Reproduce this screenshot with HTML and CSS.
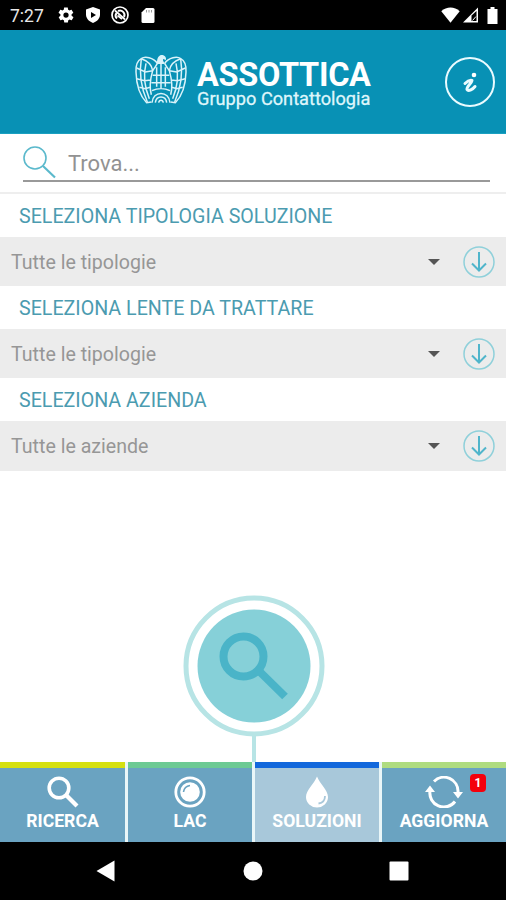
FILE: index.html
```html
<!DOCTYPE html>
<html lang="it">
    <head>
        <meta charset="UTF-8" />
        <meta name="viewport" content="width=device-width, initial-scale=1.0" />
        <title>Assottica - Soluzioni</title>

        <link rel="stylesheet" href="styles.css">
    </head>
    <body>
        <div class="app">
            <div class="status-bar">
                <span class="time">7:27</span>
                <div class="status-icons">
                    <svg width="18" height="18" viewBox="0 0 24 24" fill="#fff"><path d="M19.4 13c0-.3.1-.6.1-1s0-.7-.1-1l2.100-1.600c.2-.2.200-.4.100-.6l-2-3.500c-.1-.2-.4-.3-.6-.2l-2.500 1c-.5-.4-1.100-.7-1.700-1l-.4-2.600c0-.3-.2-.5-.5-.5h-4c-.2 0-.4.200-.5.400l-.4 2.700c-.6.200-1.100.6-1.700 1l-2.500-1c-.2-.1-.5 0-.6.200l-2 3.500c-.1.200-.1.500.1.600L4.600 11c0 .3-.1.700-.1 1s0 .7.100 1l-2.100 1.600c-.2.200-.2.400-.1.600l2 3.500c.1.200.4.300.6.200l2.500-1c.5.400 1.100.7 1.700 1l.4 2.600c0 .2.200.4.500.4h4c.2 0 .5-.2.500-.4l.4-2.600c.6-.3 1.200-.6 1.700-1l2.500 1c.2.100.5 0 .6-.2l2-3.500c.1-.2.100-.5-.1-.6zM12 15.500a3.500 3.500 0 1 1 0-7 3.500 3.500 0 0 1 0 7z"/></svg>
                    <svg width="18" height="18" viewBox="0 0 18 18"><path d="M9 1L16 3.500V8.500C16 12.500 13 15.500 9 17C5 15.500 2 12.500 2 8.500V3.500Z" fill="#fff"/><path d="M7 6L12 9L7 12Z" fill="#000"/></svg>
                    <svg width="20" height="20" viewBox="0 0 20 20" fill="none" stroke="#fff"><circle cx="10" cy="10" r="8" stroke-width="1.700"/><path d="M7 13.500A4.300 4.300 0 0 1 6.500 8M8 6A4.500 4.500 0 0 1 14 12" stroke-width="2"/><path d="M5 5.500L15 14.500" stroke-width="1.700"/><path d="M7.500 10.500L12 14" stroke-width="1.700"/></svg>
                    <svg width="14" height="17" viewBox="0 0 14 17"><path d="M5 1H12a1.500 1.500 0 0 1 1.500 1.500V14.500a1.500 1.500 0 0 1-1.500 1.500H2A1.500 1.500 0 0 1 .5 14.500V5.500Z" fill="#fff"/><path d="M5.500 3v2.500M8 3v2.500M10.500 3v2.500" stroke="#999"/></svg>
                </div>
                <div class="signal-icons">
                    <svg width="19" height="16" viewBox="0 0 19 16"><path d="M.3 4.300C5.500-.7 13.500-.7 18.700 4.300L9.500 15.700Z" fill="#fff"/></svg>
                    <svg width="17" height="16" viewBox="0 0 17 16"><path d="M1 15.500L16 .5V15.500Z" fill="#fff"/><path d="M9.500 8.500L14.500 4V14H9.500Z" fill="#000"/><path d="M10.500 13.500l3.500-4" stroke="#fff"/></svg>
                    <svg width="11" height="17" viewBox="0 0 11 17"><path d="M3.500 0H7.500V2H10.500V17H.5V2H3.500Z" fill="#fff"/></svg>
                </div>
            </div>

            <header>
                <svg class="eagle" width="62" height="60" viewBox="0 0 186 180" fill="none" stroke="#d9f3fa" stroke-width="4.500">
                    <path d="M82 40C70 22 44 18 34 26C22 32 17 48 18 66C19 104 30 138 50 158L64 156"/>
                    <path d="M104 40C116 22 142 18 152 26C164 32 169 48 168 66C167 104 156 138 136 158L122 156"/>
                    <path d="M34 26C26 74 36 120 52 156M34 26C58 34 66 46 68 62C60 90 58 114 64 134M48 40C40 72 44 112 58 146M20 54L46 66L68 62M20 86L44 92L62 90M28 112L46 116L60 112"/>
                    <path d="M152 26C160 74 150 120 134 156M152 26C128 34 120 46 118 62C126 90 128 114 122 134M138 40C146 72 142 112 128 146M166 54L140 66L118 62M166 86L142 92L124 90M158 112L140 116L126 112"/>
                    <path d="M68 62C74 54 78 48 82 40M118 62C112 54 108 48 104 40M80 52V110M93 42V118M106 52V110M68 76H118M64 98H122M66 122C82 114 104 114 120 122"/>
                    <path d="M66 158C68 121 118 121 120 158M76 158C79 135 107 135 110 158M86 158C88 148 98 148 100 158"/>
                    <path d="M81 42C80 20 90 13 100 16C106 18 109 23 108 30L99 27C98 33 102 37 105 42Z" fill="#d9f3fa" stroke="none"/>
                </svg>
                <div class="brand">
                    <h1>ASSOTTICA</h1>
                    <p>Gruppo Contattologia</p>
                </div>
                <div class="info">
                    <svg width="50" height="52" viewBox="0 0 50 52" fill="none" stroke="#eafbff"><circle cx="25" cy="26" r="24" stroke-width="2"/><circle cx="29" cy="19" r="2.300" fill="#fff" stroke="none"/><path d="M20 27.500C22 25.500 25 24 27 24.500C26.500 27.500 21.500 30.500 22 33.500C23.500 36 28 33 30 30.500" stroke-width="3" stroke-linecap="round" stroke-linejoin="round"/></svg>
                </div>
            </header>

            <main>
                <div class="search">
                    <div class="search-field">
                        <svg width="34" height="34" viewBox="0 0 34 34" fill="none" stroke="#5bb9cc"><circle cx="12" cy="12" r="11" stroke-width="1.600"/><path d="M20 20L32 31.500" stroke-width="2.200"/></svg>
                        <span>Trova...</span>
                    </div>
                </div>

                <h2>SELEZIONA TIPOLOGIA SOLUZIONE</h2>
                <div class="select">
                    <span>Tutte le tipologie</span>
                    <i class="caret"></i>
                    <svg class="down" viewBox="0 0 32 32"><circle cx="16" cy="16" r="15"/><path d="M16 6V24M9 17.500L16 24.500L23 17.500"/></svg>
                </div>

                <h2>SELEZIONA LENTE DA TRATTARE</h2>
                <div class="select">
                    <span>Tutte le tipologie</span>
                    <i class="caret"></i>
                    <svg class="down" viewBox="0 0 32 32"><circle cx="16" cy="16" r="15"/><path d="M16 6V24M9 17.500L16 24.500L23 17.500"/></svg>
                </div>

                <h2>SELEZIONA AZIENDA</h2>
                <div class="select">
                    <span>Tutte le aziende</span>
                    <i class="caret"></i>
                    <svg class="down" viewBox="0 0 32 32"><circle cx="16" cy="16" r="15"/><path d="M16 6V24M9 17.500L16 24.500L23 17.500"/></svg>
                </div>

                <div class="search-button">
                    <svg width="142" height="167" viewBox="0 0 142 167" fill="none"><path d="M71 140V167" stroke="#b7e4e5" stroke-width="4"/><circle cx="71" cy="71" r="68" stroke="#b7e4e5" stroke-width="5"/><circle cx="71" cy="71" r="56.500" fill="#86d0d8"/><g stroke="#4ab4c8"><circle cx="60.500" cy="61.500" r="20" stroke-width="8"/><path d="M75 75L102 101.500" stroke-width="8"/></g></svg>
                </div>
            </main>

            <nav class="tabs">
                <div class="tab ricerca">
                    <svg width="32" height="32" viewBox="0 0 32 32" fill="none" stroke="#fff"><circle cx="12" cy="12" r="9.800" stroke-width="3.600"/><path d="M19 19L30 30" stroke-width="4.200"/></svg>
                    <span>RICERCA</span>
                </div>
                <div class="tab lac">
                    <svg width="32" height="32" viewBox="0 0 32 32" fill="none" stroke="#fff"><circle cx="16" cy="16" r="14.200" stroke-width="2.800"/><circle cx="16" cy="16" r="9.800" fill="#fff" stroke="none"/><path d="M9.500 16C10 12.500 12.500 10 16 9.500" stroke="#6aa3c1" stroke-width="1.600"/></svg>
                    <span>LAC</span>
                </div>
                <div class="tab soluzioni">
                    <svg width="32" height="32" viewBox="0 0 32 32" fill="none"><path d="M16 .5C19 8 27 14 27 21A11 10.500 0 0 1 5 21C5 14 13 8 16 .5Z" fill="#fff"/><path d="M24 20C24 24.500 21 27 17.500 27.500" stroke="#a8c8da" stroke-width="1.800"/></svg>
                    <span>SOLUZIONI</span>
                </div>
                <div class="tab aggiorna">
                    <svg width="38" height="32" viewBox="0 0 38 32" fill="none" stroke="#fff" stroke-width="3"><path d="M9 5.500A14 14 0 0 1 33 16M30 25.500A14 14 0 0 1 5 15"/><path d="M28 16H38L33 22.500ZM0 16H10L5 9.500Z" fill="#fff" stroke="none"/></svg>
                    <span>AGGIORNA</span>
                    <b class="badge">1</b>
                </div>
            </nav>

            <div class="nav-bar">
                <svg width="19" height="22" viewBox="0 0 19 22"><path d="M18.500 .5V21.500L.5 11Z" fill="#fff"/></svg>
                <svg width="20" height="20" viewBox="0 0 20 20"><circle cx="10" cy="10" r="9.500" fill="#fff"/></svg>
                <svg width="20" height="20" viewBox="0 0 20 20"><rect x=".5" y=".5" width="19" height="19" rx="1" fill="#fff"/></svg>
            </div>
        </div>
    </body>
</html>
```
FILE: styles.css
```css
* {
    box-sizing: border-box;
}

body {
    margin: 0;
    font-family: Roboto, sans-serif;
    background-color: #fff;
}

svg {
    display: block;
    flex: none;
}

h1, h2, p {
    margin: 0;
    font-weight: normal;
}

.app {
    width: 506px;
    height: 900px;
    display: flex;
    flex-direction: column;
    overflow: hidden;
}

.status-bar {
    height: 30px;
    padding: 0 8px 0 10px;
    display: flex;
    align-items: center;
    background-color: #000;
    color: #e8e8e8;
}

.time {
    width: 47px;
    font-size: 17.5px;
    padding-top: 1px;
}

.status-icons,
.signal-icons {
    display: flex;
    align-items: center;
}

.status-icons {
    gap: 9px;
}

.status-icons svg:nth-child(3) {
    margin: 0 2px 0 -1px;
}

.signal-icons {
    margin-left: auto;
    gap: 2px;
}

.signal-icons svg:last-child {
    margin-left: 6px;
}

header {
    height: 104px;
    padding: 20px 11px 0 130px;
    display: flex;
    align-items: flex-start;
    background-color: #0891b5;
    border-bottom: 1px solid #1aa0c0;
    color: #fff;
}

.brand {
    margin: 12px 0 0 5px;
    white-space: nowrap;
}

h1 {
    font-size: 32.5px;
    line-height: 27px;
    font-weight: bold;
    letter-spacing: -0.3px;
}

.brand p {
    font-size: 18.2px;
    line-height: 20px;
    color: #dff6fb;
    -webkit-text-stroke: 0.3px #dff6fb;
}

.info {
    margin: 6px 0 0 auto;
}

main {
    flex: 1;
    display: flex;
    flex-direction: column;
}

.search {
    height: 60px;
    padding: 0 16px 0 23px;
    border-bottom: 2px solid #eee;
}

.search-field {
    height: 48px;
    padding-top: 12px;
    display: flex;
    gap: 11px;
    border-bottom: 2px solid #999;
    color: #929292;
    font-size: 22px;
    line-height: 35px;
}

h2 {
    height: 43px;
    padding-left: 19px;
    font-size: 19.65px;
    line-height: 46px;
    color: #4b9bb0;
}

.select {
    height: 49.2px;
    padding: 0 11px;
    display: flex;
    align-items: center;
    background-color: #ececec;
    color: #969696;
    font-size: 19.6px;
}

.select span {
    padding-top: 2px;
}

.caret {
    margin-left: auto;
    border: 6px solid transparent;
    border-top-color: #555;
    border-bottom: 0;
}

.down {
    width: 32px;
    height: 32px;
    margin-left: 23px;
    fill: none;
    stroke: #8fd0da;
    stroke-width: 1.5;
}

.down path {
    stroke: #50b5cb;
    stroke-width: 2;
}

.search-button {
    margin-top: auto;
    padding-left: 182.5px;
}

.tabs {
    height: 80px;
    display: grid;
    grid-template-columns: 125px 124px 124px 1fr;
    gap: 3px;
    background-color: #e9f6f8;
}

.tab {
    position: relative;
    padding-top: 8px;
    display: flex;
    flex-direction: column;
    align-items: center;
    border-top: 6px solid;
    background-color: #6aa3c1;
}

.tab span {
    margin-top: 2px;
    font-size: 17.6px;
    line-height: 22px;
    font-weight: bold;
    color: #fff;
}

.ricerca {
    border-color: #d5e010;
}

.lac {
    border-color: #6dca94;
}

.soluzioni {
    border-color: #1268dc;
    background-color: #a8c8da;
}

.aggiorna {
    border-color: #afdc80;
}

.badge {
    position: absolute;
    top: 6px;
    right: 20px;
    width: 16px;
    height: 18px;
    border-radius: 4px;
    background-color: #f4000c;
    color: #fff;
    font-size: 12px;
    line-height: 18px;
    text-align: center;
}

.nav-bar {
    height: 58px;
    padding: 0 97px 0 96px;
    display: flex;
    align-items: center;
    justify-content: space-between;
    background-color: #000;
}

.nav-bar svg:nth-child(2) {
    margin-left: 2px;
}
```
